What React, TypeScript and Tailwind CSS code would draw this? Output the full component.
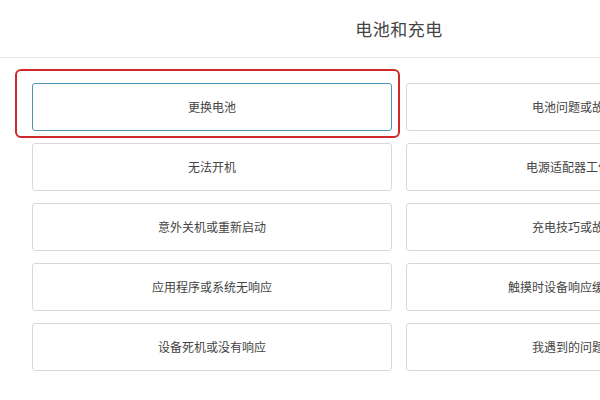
const leftItems = [
  "更换电池",
  "无法开机",
  "意外关机或重新启动",
  "应用程序或系统无响应",
  "设备死机或没有响应",
];

const rightItems = [
  "电池问题或故障提示",
  "电源适配器工作不正常",
  "充电技巧或故障排除",
  "触摸时设备响应缓慢或无响应",
  "我遇到的问题未列出",
];

function TopicCard({ label, active }: { label: string; active?: boolean }) {
  return (
    <div className="relative">
      {active && (
        <div className="absolute -left-[17px] -right-[8px] -top-[14px] -bottom-[7px] rounded-[6px] border-2 border-[#d0282b] pointer-events-none" />
      )}
      <button
        className={
          active
            ? "w-full h-[48px] rounded-[3px] border border-[#4d93b5] bg-white text-[12px] text-[#444] flex items-center justify-center"
            : "w-full h-[48px] rounded-[3px] border border-[#d9d9d9] bg-white text-[12px] text-[#444] flex items-center justify-center"
        }
      >
        {label}
      </button>
    </div>
  );
}

export default function App() {
  const rows = leftItems.map((l, i) => [l, rightItems[i]]);

  return (
    <div
      className="w-[600px] h-[400px] overflow-hidden bg-white"
      style={{ fontFamily: '"Noto Sans CJK SC", "Noto Sans", sans-serif' }}
    >
      <div className="w-[798px]">
        <div className="h-[58px] flex items-center justify-center border-b border-[#e6e6e6]">
          <h1 className="text-[17px] text-[#444] tracking-[0.5px]">电池和充电</h1>
        </div>
        <div className="grid grid-cols-2 gap-x-[14px] gap-y-[12px] px-[32px] pt-[25px]">
          {rows.map(([l, r], i) => (
            <>
              <TopicCard key={"l" + i} label={l} active={i === 0} />
              <TopicCard key={"r" + i} label={r} />
            </>
          ))}
        </div>
      </div>
    </div>
  );
}
